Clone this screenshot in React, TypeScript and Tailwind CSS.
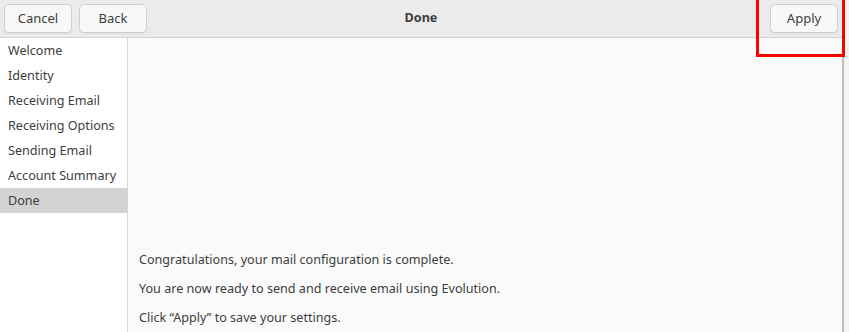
const steps = [
  "Welcome",
  "Identity",
  "Receiving Email",
  "Receiving Options",
  "Sending Email",
  "Account Summary",
  "Done",
];

const HeaderButton = ({ text }: { text: string }) => (
  <button className="h-[29px] w-[68px] rounded-[5px] border border-[#d0d0d0] bg-[#f8f8f8] text-[13px] text-[#3d3d3d] shadow-[0_1px_0_rgba(0,0,0,0.06)]">
    {text}
  </button>
);

const App = () => {
  return (
    <div
      className="relative flex h-[332px] w-[849px] overflow-hidden bg-[#f0f0f0] text-[#3d3d3d]"
      style={{ fontFamily: '"Noto Sans", "Open Sans", sans-serif' }}
    >
      <div className="flex w-[844px] flex-col border-r-2 border-[#bdbdbd]">
        <div className="grid h-[38px] grid-cols-[1fr_auto_1fr] items-center border-b border-[#d4d4d4] bg-[#ebebeb] px-[4px]">
          <div className="flex gap-[7px]">
            <HeaderButton text="Cancel" />
            <HeaderButton text="Back" />
          </div>
          <div className="text-center text-[12.6px] font-bold text-[#3d3d3d]">
            Done
          </div>
          <div className="flex justify-end">
            <HeaderButton text="Apply" />
          </div>
        </div>
        <div className="flex flex-1">
          <div className="w-[128px] border-r border-[#d6d6d6] bg-white">
            {steps.map((s) => (
              <div
                key={s}
                className={`flex h-[25px] items-center pl-[8px] pt-[2px] text-[12.6px] ${
                  s === "Done" ? "bg-[#d3d3d3]" : ""
                }`}
              >
                {s}
              </div>
            ))}
          </div>
          <div className="flex flex-1 flex-col justify-end gap-[10px] bg-[#fafafa] pb-[5px] pl-[11px] text-[12.6px]">
            <p className="leading-[19px]">
              Congratulations, your mail configuration is complete.
            </p>
            <p className="leading-[19px]">
              You are now ready to send and receive email using Evolution.
            </p>
            <p className="leading-[19px]">
              Click “Apply” to save your settings.
            </p>
          </div>
        </div>
      </div>
      <div className="flex-1 bg-[#f4f4f4]" />
      <div className="absolute left-[756px] top-[-3px] h-[60px] w-[89px] border-[3px] border-[#f00]" />
    </div>
  );
};

export default App;
